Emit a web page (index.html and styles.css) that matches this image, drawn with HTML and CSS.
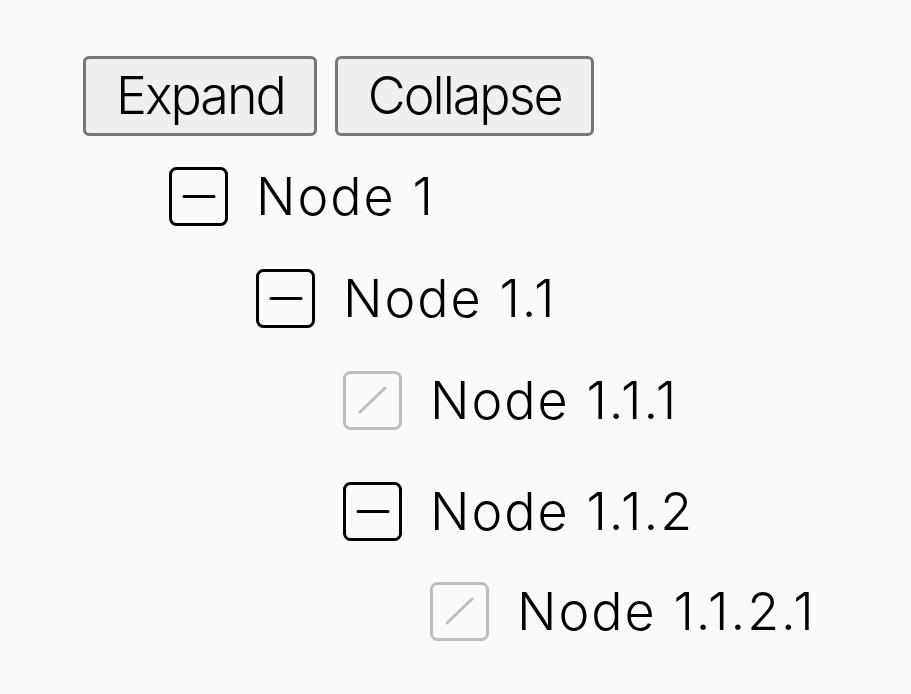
FILE: index.html
```html
<!DOCTYPE html>
<html lang="en">
<head>
<meta charset="utf-8">
<title>Tree</title>
<link rel="stylesheet" href="styles.css">
</head>
<body>
<div class="page">
  <div class="toolbar">
    <button class="btn" type="button">Expand</button>
    <button class="btn" type="button">Collapse</button>
  </div>
  <ul class="tree">
    <li>
      <div class="row">
        <svg class="toggle" viewBox="0 0 59 59"><rect x="1.5" y="1.5" width="56" height="56" rx="6"/><line x1="15" y1="29.5" x2="45" y2="29.5"/></svg>
        <span class="label">Node 1</span>
      </div>
      <ul class="tree sub">
        <li>
          <div class="row">
            <svg class="toggle" viewBox="0 0 59 59"><rect x="1.5" y="1.5" width="56" height="56" rx="6"/><line x1="15" y1="29.5" x2="45" y2="29.5"/></svg>
            <span class="label">Node 1.1</span>
          </div>
          <ul class="tree sub">
            <li>
              <div class="row leaf">
                <svg class="toggle off" viewBox="0 0 59 59"><rect x="1.5" y="1.5" width="56" height="56" rx="6"/><line x1="17" y1="41" x2="42" y2="17"/></svg>
                <span class="label">Node 1.1.1</span>
              </div>
            </li>
            <li>
              <div class="row tight">
                <svg class="toggle" viewBox="0 0 59 59"><rect x="1.5" y="1.5" width="56" height="56" rx="6"/><line x1="15" y1="29.5" x2="45" y2="29.5"/></svg>
                <span class="label">Node 1.1.2</span>
              </div>
              <ul class="tree sub">
                <li>
                  <div class="row leaf">
                    <svg class="toggle off" viewBox="0 0 59 59"><rect x="1.5" y="1.5" width="56" height="56" rx="6"/><line x1="17" y1="41" x2="42" y2="17"/></svg>
                    <span class="label">Node 1.1.2.1</span>
                  </div>
                </li>
              </ul>
            </li>
          </ul>
        </li>
      </ul>
    </li>
  </ul>
</div>
</body>
</html>
```
FILE: styles.css
```css
html, body {
  margin: 0;
  padding: 0;
  background: #fafaf9;
}
body {
  font-family: "Inter", "Noto Sans", sans-serif;
  font-weight: 300;
  color: #000;
}
.page {
  padding: 56px 0 0 83px;
}
.toolbar {
  display: flex;
  gap: 18px;
}
.btn {
  font-family: inherit;
  font-weight: 300;
  font-size: 52px;
  letter-spacing: -2px;
  line-height: 1;
  color: #000;
  height: 80px;
  padding: 0 29px 0 30px;
  border: 3px solid #767676;
  border-radius: 6px;
  background: #efefef;
  margin: 0;
}
.tree {
  list-style: none;
  margin: 0;
  padding: 0 0 0 86px;
}
.page > .tree {
  margin-top: 31px;
}
.tree.sub {
  padding-left: 87px;
}
.row {
  display: flex;
  align-items: center;
  gap: 28px;
  height: 59px;
  margin-bottom: 43px;
}
.row.leaf {
  margin-bottom: 52px;
}
.row.tight {
  margin-bottom: 41px;
}
.toggle {
  width: 59px;
  height: 59px;
  flex: none;
  fill: none;
  stroke: #000;
  stroke-width: 3;
  stroke-linecap: round;
}
.toggle.off {
  stroke: #bdbdbd;
}
.label {
  font-size: 52px;
  letter-spacing: 2px;
  line-height: 1;
}
```
